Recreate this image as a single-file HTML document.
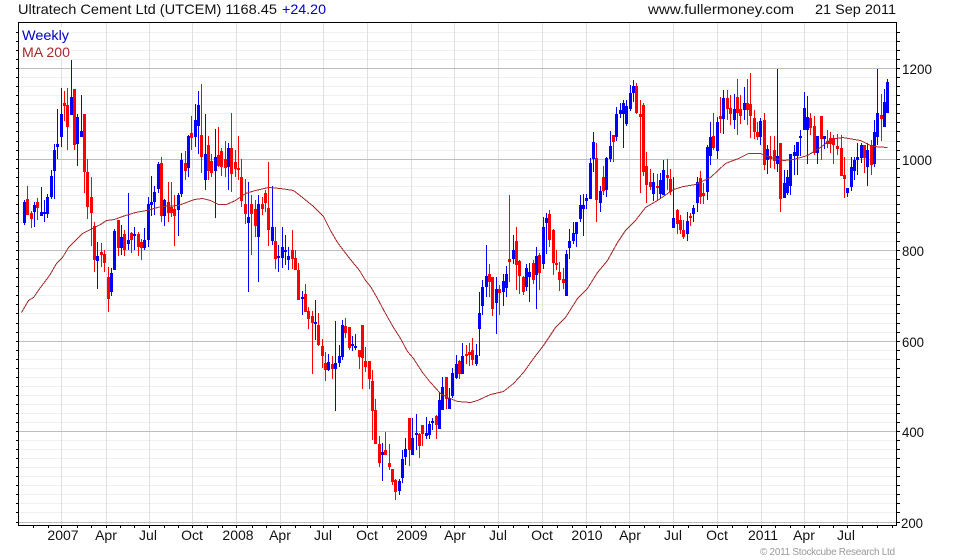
<!DOCTYPE html>
<html><head><meta charset="utf-8"><title>Ultratech Cement</title>
<style>
html,body{margin:0;padding:0;background:#fff}
svg{display:block}
text{font-family:"Liberation Sans",Arial,sans-serif;font-size:14px;fill:#111}
.r{fill:#f00}.b{fill:#00f}
</style></head><body>
<svg xmlns="http://www.w3.org/2000/svg" width="980" height="560" viewBox="0 0 980 560">
<g shape-rendering="crispEdges" fill="none">
<path stroke="#f0f0f0" transform="translate(0 .5)" d="M19 32H896M19 41H896M19 50H896M19 59H896M19 77H896M19 86H896M19 95H896M19 104H896M19 113H896M19 122H896M19 131H896M19 141H896M19 150H896M19 168H896M19 177H896M19 186H896M19 195H896M19 204H896M19 213H896M19 222H896M19 232H896M19 241H896M19 259H896M19 268H896M19 277H896M19 286H896M19 295H896M19 304H896M19 313H896M19 323H896M19 332H896M19 350H896M19 359H896M19 368H896M19 377H896M19 386H896M19 395H896M19 404H896M19 413H896M19 422H896M19 440H896M19 449H896M19 458H896M19 467H896M19 476H896M19 485H896M19 494H896M19 503H896M19 512H896"/>
<path stroke="#e0e0e0" transform="translate(.5 0)" d="M61 23V525M106 23V525M149 23V525M192 23V525M236 23V525M280 23V525M323 23V525M367 23V525M411 23V525M454 23V525M498 23V525M542 23V525M586 23V525M629 23V525M673 23V525M717 23V525M761 23V525M804 23V525M847 23V525"/>
<path stroke="#bebebe" transform="translate(0 .5)" d="M19 68H896M19 159H896M19 250H896M19 341H896M19 431H896M19 522H896"/>
<rect x="19" y="27" width="52" height="31" fill="#fff"/>
</g>
<g shape-rendering="crispEdges">
<path class=b d="M24 200h1V225h-1zM23 202h3V223h-3z"/>
<path class=r d="M27 186h1V215h-1zM26 199h3V215h-3z"/>
<path class=r d="M31 211h1V228h-1zM30 213h3V219h-3z"/>
<path class=b d="M34 202h1V227h-1zM33 205h3V212h-3z"/>
<path class=r d="M37 198h1V220h-1zM36 202h3V208h-3z"/>
<path class=b d="M41 187h1V216h-1zM40 212h3V216h-3z"/>
<path class=b d="M44 200h1V222h-1zM43 212h3V214h-3z"/>
<path class=b d="M47 194h1V218h-1zM46 197h3V214h-3z"/>
<path class=b d="M51 170h1V199h-1zM50 176h3V197h-3z"/>
<path class=b d="M54 144h1V199h-1zM53 150h3V171h-3z"/>
<path class=b d="M57 109h1V159h-1zM56 144h3V147h-3z"/>
<path class=b d="M61 88h1V147h-1zM60 114h3V137h-3z"/>
<path class=r d="M64 91h1V121h-1zM63 103h3V106h-3z"/>
<path class=r d="M67 88h1V150h-1zM66 105h3V127h-3z"/>
<path class=b d="M71 60h1V115h-1zM70 97h3V115h-3z"/>
<path class=r d="M74 89h1V150h-1zM73 89h3V145h-3z"/>
<path class=b d="M77 114h1V166h-1zM76 117h3V144h-3z"/>
<path class=b d="M81 95h1V137h-1zM80 131h3V137h-3z"/>
<path class=r d="M84 114h1V193h-1zM83 114h3V172h-3z"/>
<path class=r d="M87 159h1V219h-1zM86 172h3V207h-3z"/>
<path class=r d="M91 177h1V246h-1zM90 197h3V213h-3z"/>
<path class=r d="M94 222h1V272h-1zM93 226h3V260h-3z"/>
<path class=b d="M97 242h1V289h-1zM96 256h3V261h-3z"/>
<path class=r d="M101 243h1V267h-1zM100 252h3V255h-3z"/>
<path class=r d="M104 250h1V272h-1zM103 254h3V263h-3z"/>
<path class=r d="M108 267h1V312h-1zM107 277h3V299h-3z"/>
<path class=b d="M111 268h1V296h-1zM110 273h3V292h-3z"/>
<path class=b d="M114 229h1V270h-1zM113 231h3V270h-3z"/>
<path class=r d="M118 220h1V256h-1zM117 220h3V248h-3z"/>
<path class=b d="M121 225h1V255h-1zM120 237h3V248h-3z"/>
<path class=r d="M124 230h1V256h-1zM123 234h3V250h-3z"/>
<path class=b d="M128 193h1V250h-1zM127 240h3V244h-3z"/>
<path class=r d="M131 232h1V253h-1zM130 233h3V240h-3z"/>
<path class=b d="M134 227h1V250h-1zM133 234h3V236h-3z"/>
<path class=r d="M138 232h1V256h-1zM137 234h3V247h-3z"/>
<path class=r d="M141 239h1V260h-1zM140 242h3V248h-3z"/>
<path class=b d="M144 228h1V250h-1zM143 240h3V248h-3z"/>
<path class=b d="M148 197h1V247h-1zM147 204h3V240h-3z"/>
<path class=b d="M151 176h1V216h-1zM150 202h3V205h-3z"/>
<path class=b d="M154 186h1V215h-1zM153 192h3V202h-3z"/>
<path class=b d="M158 162h1V193h-1zM157 164h3V189h-3z"/>
<path class=r d="M161 157h1V222h-1zM160 163h3V216h-3z"/>
<path class=b d="M164 199h1V226h-1zM163 200h3V216h-3z"/>
<path class=r d="M168 182h1V222h-1zM167 202h3V213h-3z"/>
<path class=r d="M171 182h1V217h-1zM170 207h3V213h-3z"/>
<path class=r d="M174 195h1V246h-1zM173 209h3V216h-3z"/>
<path class=b d="M178 193h1V236h-1zM177 195h3V210h-3z"/>
<path class=b d="M181 153h1V197h-1zM180 160h3V194h-3z"/>
<path class=r d="M185 151h1V180h-1zM184 163h3V171h-3z"/>
<path class=b d="M188 135h1V177h-1zM187 136h3V168h-3z"/>
<path class=r d="M191 116h1V150h-1zM190 133h3V138h-3z"/>
<path class=b d="M195 104h1V147h-1zM194 120h3V137h-3z"/>
<path class=b d="M198 91h1V154h-1zM197 105h3V126h-3z"/>
<path class=r d="M201 84h1V173h-1zM200 135h3V157h-3z"/>
<path class=b d="M205 114h1V190h-1zM204 154h3V180h-3z"/>
<path class=r d="M208 136h1V180h-1zM207 145h3V171h-3z"/>
<path class=r d="M211 154h1V177h-1zM210 161h3V173h-3z"/>
<path class=b d="M215 129h1V218h-1zM214 157h3V171h-3z"/>
<path class=r d="M218 127h1V167h-1zM217 155h3V166h-3z"/>
<path class=r d="M221 148h1V176h-1zM220 151h3V167h-3z"/>
<path class=r d="M225 141h1V177h-1zM224 159h3V168h-3z"/>
<path class=b d="M228 143h1V190h-1zM227 148h3V167h-3z"/>
<path class=r d="M231 113h1V192h-1zM230 148h3V174h-3z"/>
<path class=r d="M235 150h1V177h-1zM234 162h3V169h-3z"/>
<path class=r d="M238 136h1V180h-1zM237 168h3V170h-3z"/>
<path class=r d="M241 159h1V207h-1zM240 177h3V201h-3z"/>
<path class=r d="M245 179h1V224h-1zM244 204h3V214h-3z"/>
<path class=b d="M248 182h1V292h-1zM247 217h3V223h-3z"/>
<path class=r d="M251 195h1V255h-1zM250 204h3V214h-3z"/>
<path class=r d="M255 200h1V237h-1zM254 209h3V226h-3z"/>
<path class=b d="M258 195h1V282h-1zM257 204h3V237h-3z"/>
<path class=r d="M262 197h1V215h-1zM261 204h3V209h-3z"/>
<path class=r d="M265 190h1V212h-1zM264 193h3V203h-3z"/>
<path class=r d="M268 162h1V246h-1zM267 208h3V230h-3z"/>
<path class=b d="M272 186h1V245h-1zM271 227h3V241h-3z"/>
<path class=r d="M275 227h1V269h-1zM274 241h3V259h-3z"/>
<path class=b d="M278 245h1V272h-1zM277 256h3V258h-3z"/>
<path class=b d="M282 227h1V268h-1zM281 247h3V258h-3z"/>
<path class=b d="M285 235h1V265h-1zM284 250h3V252h-3z"/>
<path class=b d="M288 247h1V270h-1zM287 256h3V260h-3z"/>
<path class=r d="M292 230h1V269h-1zM291 250h3V259h-3z"/>
<path class=r d="M295 250h1V270h-1zM294 258h3V270h-3z"/>
<path class=r d="M298 263h1V300h-1zM297 270h3V300h-3z"/>
<path class=b d="M302 291h1V315h-1zM301 297h3V299h-3z"/>
<path class=r d="M305 284h1V312h-1zM304 294h3V312h-3z"/>
<path class=r d="M308 307h1V329h-1zM307 311h3V319h-3z"/>
<path class=r d="M312 311h1V374h-1zM311 316h3V323h-3z"/>
<path class=b d="M315 300h1V340h-1zM314 322h3V324h-3z"/>
<path class=r d="M318 313h1V346h-1zM317 325h3V345h-3z"/>
<path class=r d="M322 339h1V368h-1zM321 346h3V356h-3z"/>
<path class=r d="M325 352h1V381h-1zM324 363h3V370h-3z"/>
<path class=b d="M328 354h1V371h-1zM327 362h3V370h-3z"/>
<path class=r d="M332 356h1V379h-1zM331 364h3V369h-3z"/>
<path class=b d="M335 321h1V411h-1zM334 363h3V369h-3z"/>
<path class=b d="M339 345h1V367h-1zM338 356h3V363h-3z"/>
<path class=b d="M342 320h1V360h-1zM341 325h3V357h-3z"/>
<path class=r d="M345 318h1V338h-1zM344 326h3V333h-3z"/>
<path class=r d="M349 327h1V350h-1zM348 327h3V348h-3z"/>
<path class=b d="M352 336h1V351h-1zM351 344h3V346h-3z"/>
<path class=b d="M355 334h1V350h-1zM354 346h3V348h-3z"/>
<path class=r d="M359 350h1V369h-1zM358 350h3V357h-3z"/>
<path class=r d="M362 325h1V389h-1zM361 325h3V358h-3z"/>
<path class=r d="M365 347h1V372h-1zM364 361h3V367h-3z"/>
<path class=r d="M369 361h1V389h-1zM368 361h3V379h-3z"/>
<path class=r d="M372 370h1V440h-1zM371 381h3V411h-3z"/>
<path class=r d="M375 399h1V444h-1zM374 410h3V444h-3z"/>
<path class=r d="M379 436h1V467h-1zM378 444h3V463h-3z"/>
<path class=b d="M382 443h1V481h-1zM381 452h3V455h-3z"/>
<path class=r d="M385 432h1V455h-1zM384 450h3V455h-3z"/>
<path class=r d="M389 444h1V470h-1zM388 463h3V467h-3z"/>
<path class=r d="M392 469h1V485h-1zM391 469h3V482h-3z"/>
<path class=r d="M395 479h1V500h-1zM394 480h3V492h-3z"/>
<path class=b d="M399 479h1V495h-1zM398 481h3V491h-3z"/>
<path class=b d="M402 450h1V483h-1zM401 459h3V478h-3z"/>
<path class=b d="M405 438h1V465h-1zM404 449h3V457h-3z"/>
<path class=r d="M409 418h1V466h-1zM408 418h3V450h-3z"/>
<path class=b d="M412 418h1V455h-1zM411 438h3V455h-3z"/>
<path class=b d="M416 414h1V450h-1zM415 433h3V435h-3z"/>
<path class=r d="M419 433h1V458h-1zM418 434h3V446h-3z"/>
<path class=r d="M422 425h1V446h-1zM421 425h3V434h-3z"/>
<path class=b d="M426 417h1V439h-1zM425 433h3V436h-3z"/>
<path class=b d="M429 421h1V439h-1zM428 424h3V435h-3z"/>
<path class=b d="M432 418h1V430h-1zM431 421h3V423h-3z"/>
<path class=r d="M436 415h1V439h-1zM435 416h3V425h-3z"/>
<path class=b d="M439 393h1V429h-1zM438 400h3V429h-3z"/>
<path class=b d="M442 377h1V410h-1zM441 387h3V410h-3z"/>
<path class=r d="M446 377h1V409h-1zM445 377h3V399h-3z"/>
<path class=b d="M449 388h1V409h-1zM448 398h3V409h-3z"/>
<path class=b d="M452 368h1V398h-1zM451 373h3V396h-3z"/>
<path class=b d="M456 355h1V379h-1zM455 364h3V378h-3z"/>
<path class=r d="M459 360h1V379h-1zM458 361h3V374h-3z"/>
<path class=b d="M462 343h1V374h-1zM461 356h3V374h-3z"/>
<path class=r d="M466 345h1V364h-1zM465 354h3V356h-3z"/>
<path class=r d="M469 343h1V366h-1zM468 352h3V355h-3z"/>
<path class=r d="M472 338h1V365h-1zM471 350h3V360h-3z"/>
<path class=b d="M476 344h1V366h-1zM475 355h3V364h-3z"/>
<path class=b d="M479 292h1V356h-1zM478 313h3V329h-3z"/>
<path class=b d="M482 280h1V315h-1zM481 287h3V306h-3z"/>
<path class=b d="M486 245h1V297h-1zM485 276h3V287h-3z"/>
<path class=r d="M489 264h1V297h-1zM488 274h3V282h-3z"/>
<path class=r d="M492 277h1V316h-1zM491 277h3V309h-3z"/>
<path class=b d="M496 277h1V334h-1zM495 289h3V303h-3z"/>
<path class=r d="M499 285h1V315h-1zM498 289h3V293h-3z"/>
<path class=b d="M503 274h1V306h-1zM502 281h3V292h-3z"/>
<path class=b d="M506 266h1V297h-1zM505 274h3V288h-3z"/>
<path class=r d="M509 195h1V282h-1zM508 259h3V262h-3z"/>
<path class=b d="M513 235h1V264h-1zM512 250h3V259h-3z"/>
<path class=r d="M516 227h1V290h-1zM515 241h3V265h-3z"/>
<path class=r d="M519 260h1V294h-1zM518 261h3V276h-3z"/>
<path class=r d="M523 276h1V295h-1zM522 277h3V292h-3z"/>
<path class=b d="M526 264h1V291h-1zM525 268h3V287h-3z"/>
<path class=b d="M529 263h1V302h-1zM528 272h3V277h-3z"/>
<path class=r d="M533 260h1V284h-1zM532 263h3V280h-3z"/>
<path class=b d="M536 247h1V309h-1zM535 256h3V275h-3z"/>
<path class=r d="M539 253h1V290h-1zM538 255h3V273h-3z"/>
<path class=b d="M543 217h1V269h-1zM542 227h3V264h-3z"/>
<path class=b d="M546 213h1V254h-1zM545 218h3V223h-3z"/>
<path class=r d="M549 210h1V247h-1zM548 214h3V240h-3z"/>
<path class=r d="M553 229h1V275h-1zM552 230h3V263h-3z"/>
<path class=r d="M556 250h1V270h-1zM555 263h3V265h-3z"/>
<path class=r d="M559 262h1V291h-1zM558 272h3V280h-3z"/>
<path class=r d="M563 268h1V289h-1zM562 279h3V283h-3z"/>
<path class=b d="M566 250h1V296h-1zM565 254h3V296h-3z"/>
<path class=b d="M569 229h1V259h-1zM568 241h3V248h-3z"/>
<path class=b d="M573 222h1V244h-1zM572 233h3V241h-3z"/>
<path class=b d="M576 222h1V247h-1zM575 222h3V234h-3z"/>
<path class=b d="M580 195h1V222h-1zM579 205h3V219h-3z"/>
<path class=b d="M583 194h1V236h-1zM582 205h3V209h-3z"/>
<path class=b d="M586 194h1V209h-1zM585 198h3V201h-3z"/>
<path class=b d="M590 158h1V199h-1zM589 163h3V199h-3z"/>
<path class=b d="M593 132h1V172h-1zM592 142h3V159h-3z"/>
<path class=r d="M596 143h1V222h-1zM595 158h3V200h-3z"/>
<path class=b d="M600 186h1V212h-1zM599 191h3V203h-3z"/>
<path class=r d="M603 166h1V195h-1zM602 177h3V191h-3z"/>
<path class=b d="M606 157h1V197h-1zM605 158h3V190h-3z"/>
<path class=b d="M610 131h1V162h-1zM609 146h3V159h-3z"/>
<path class=r d="M613 135h1V162h-1zM612 135h3V142h-3z"/>
<path class=b d="M616 107h1V141h-1zM615 114h3V137h-3z"/>
<path class=b d="M620 103h1V118h-1zM619 110h3V114h-3z"/>
<path class=b d="M623 100h1V148h-1zM622 103h3V114h-3z"/>
<path class=b d="M626 100h1V126h-1zM625 106h3V124h-3z"/>
<path class=b d="M630 85h1V111h-1zM629 93h3V109h-3z"/>
<path class=b d="M633 80h1V102h-1zM632 86h3V93h-3z"/>
<path class=r d="M636 83h1V114h-1zM635 86h3V113h-3z"/>
<path class=r d="M640 100h1V193h-1zM639 114h3V117h-3z"/>
<path class=r d="M643 103h1V176h-1zM642 105h3V172h-3z"/>
<path class=r d="M646 152h1V203h-1zM645 166h3V185h-3z"/>
<path class=r d="M650 169h1V190h-1zM649 182h3V187h-3z"/>
<path class=b d="M653 173h1V201h-1zM652 182h3V194h-3z"/>
<path class=r d="M657 174h1V200h-1zM656 186h3V188h-3z"/>
<path class=b d="M660 173h1V198h-1zM659 180h3V194h-3z"/>
<path class=b d="M663 160h1V195h-1zM662 170h3V195h-3z"/>
<path class=r d="M667 159h1V190h-1zM666 175h3V178h-3z"/>
<path class=r d="M670 169h1V195h-1zM669 179h3V192h-3z"/>
<path class=b d="M673 177h1V228h-1zM672 218h3V228h-3z"/>
<path class=r d="M677 209h1V234h-1zM676 210h3V224h-3z"/>
<path class=r d="M680 215h1V234h-1zM679 220h3V230h-3z"/>
<path class=r d="M683 220h1V239h-1zM682 230h3V237h-3z"/>
<path class=b d="M687 212h1V241h-1zM686 221h3V234h-3z"/>
<path class=r d="M690 213h1V226h-1zM689 216h3V218h-3z"/>
<path class=b d="M693 205h1V222h-1zM692 208h3V214h-3z"/>
<path class=b d="M697 177h1V212h-1zM696 182h3V203h-3z"/>
<path class=r d="M700 171h1V204h-1zM699 178h3V197h-3z"/>
<path class=r d="M703 183h1V204h-1zM702 193h3V196h-3z"/>
<path class=b d="M707 145h1V200h-1zM706 147h3V192h-3z"/>
<path class=b d="M710 122h1V165h-1zM709 137h3V156h-3z"/>
<path class=r d="M713 113h1V150h-1zM712 136h3V148h-3z"/>
<path class=b d="M717 117h1V159h-1zM716 122h3V151h-3z"/>
<path class=r d="M720 97h1V133h-1zM719 116h3V119h-3z"/>
<path class=b d="M723 90h1V134h-1zM722 98h3V119h-3z"/>
<path class=r d="M727 90h1V120h-1zM726 98h3V109h-3z"/>
<path class=r d="M730 95h1V125h-1zM729 108h3V114h-3z"/>
<path class=b d="M734 94h1V129h-1zM733 109h3V120h-3z"/>
<path class=r d="M737 79h1V135h-1zM736 97h3V113h-3z"/>
<path class=r d="M740 95h1V124h-1zM739 109h3V116h-3z"/>
<path class=b d="M744 87h1V120h-1zM743 103h3V110h-3z"/>
<path class=r d="M747 79h1V125h-1zM746 103h3V110h-3z"/>
<path class=r d="M750 73h1V138h-1zM749 104h3V116h-3z"/>
<path class=r d="M754 110h1V139h-1zM753 118h3V132h-3z"/>
<path class=r d="M757 122h1V140h-1zM756 132h3V137h-3z"/>
<path class=b d="M760 118h1V145h-1zM759 121h3V137h-3z"/>
<path class=r d="M764 113h1V170h-1zM763 120h3V165h-3z"/>
<path class=b d="M767 145h1V174h-1zM766 149h3V160h-3z"/>
<path class=r d="M770 136h1V168h-1zM769 156h3V159h-3z"/>
<path class=r d="M774 136h1V169h-1zM773 150h3V161h-3z"/>
<path class=b d="M777 69h1V172h-1zM776 156h3V164h-3z"/>
<path class=r d="M780 143h1V212h-1zM779 143h3V199h-3z"/>
<path class=b d="M784 170h1V198h-1zM783 183h3V198h-3z"/>
<path class=b d="M787 170h1V195h-1zM786 177h3V193h-3z"/>
<path class=b d="M790 154h1V195h-1zM789 154h3V186h-3z"/>
<path class=b d="M794 145h1V175h-1zM793 152h3V156h-3z"/>
<path class=b d="M797 142h1V175h-1zM796 142h3V156h-3z"/>
<path class=b d="M800 130h1V156h-1zM799 136h3V138h-3z"/>
<path class=b d="M804 92h1V130h-1zM803 108h3V130h-3z"/>
<path class=b d="M807 96h1V164h-1zM806 117h3V130h-3z"/>
<path class=r d="M810 113h1V135h-1zM809 118h3V128h-3z"/>
<path class=r d="M814 116h1V155h-1zM813 126h3V153h-3z"/>
<path class=b d="M817 136h1V164h-1zM816 136h3V153h-3z"/>
<path class=r d="M821 116h1V160h-1zM820 116h3V139h-3z"/>
<path class=b d="M824 136h1V149h-1zM823 136h3V139h-3z"/>
<path class=r d="M827 130h1V148h-1zM826 141h3V144h-3z"/>
<path class=r d="M830 132h1V153h-1zM829 138h3V144h-3z"/>
<path class=r d="M833 135h1V164h-1zM832 138h3V145h-3z"/>
<path class=r d="M837 134h1V155h-1zM836 146h3V149h-3z"/>
<path class=r d="M841 135h1V176h-1zM840 148h3V176h-3z"/>
<path class=r d="M844 157h1V198h-1zM843 175h3V179h-3z"/>
<path class=b d="M847 188h1V197h-1zM846 188h3V193h-3z"/>
<path class=b d="M851 157h1V191h-1zM850 167h3V187h-3z"/>
<path class=b d="M854 157h1V180h-1zM853 160h3V171h-3z"/>
<path class=b d="M857 143h1V175h-1zM856 157h3V160h-3z"/>
<path class=b d="M861 143h1V163h-1zM860 145h3V158h-3z"/>
<path class=r d="M864 145h1V173h-1zM863 145h3V158h-3z"/>
<path class=b d="M867 143h1V186h-1zM866 150h3V167h-3z"/>
<path class=r d="M871 140h1V175h-1zM870 145h3V165h-3z"/>
<path class=b d="M874 120h1V167h-1zM873 132h3V164h-3z"/>
<path class=b d="M877 69h1V145h-1zM876 113h3V137h-3z"/>
<path class=r d="M881 94h1V141h-1zM880 115h3V119h-3z"/>
<path class=b d="M884 89h1V127h-1zM883 102h3V127h-3z"/>
<path class=b d="M887 79h1V113h-1zM886 82h3V113h-3z"/>
</g>
<polyline transform="translate(.5 .5)" shape-rendering="crispEdges" fill="none" stroke="#a52a2a" stroke-width="1" points="21,312 28,300 33,297 40,287 49,275 56,263 62,257 68,247 76,239 82,233 90,229 100,224 106,220 114,219 122,216 135,212 146,210 161,206 178,205 186,202 194,199 202,198 210,200 218,204 226,204 235,200 245,193 255,190 268,187 280,188 293,190 302,197 313,206 323,216 330,230 337,242 343,250 350,259 359,270 365,280 370,286 377,298 385,313 393,327 400,338 407,351 413,358 422,372 430,382 440,393 447,397 457,401 470,402 477,400 490,394 503,391 513,383 523,372 533,358 543,345 555,327 565,317 577,298 587,288 597,272 607,260 617,242 625,230 635,220 645,207 657,200 673,189 683,186 695,184 710,177 725,163 738,158 748,153 760,153 770,157 783,160 793,159 807,155 820,147 830,139 842,137 860,140 872,146 887,147"/>
<g shape-rendering="crispEdges" fill="none" stroke="#000">
<path transform="translate(.5 .5)" d="M18 22H896V525H18Z"/>
<path transform="translate(0 .5)" d="M16 32H18M16 41H18M16 50H18M16 59H18M16 68H18M16 77H18M16 86H18M16 95H18M16 104H18M16 113H18M16 122H18M16 131H18M16 141H18M16 150H18M16 159H18M16 168H18M16 177H18M16 186H18M16 195H18M16 204H18M16 213H18M16 222H18M16 232H18M16 241H18M16 250H18M16 259H18M16 268H18M16 277H18M16 286H18M16 295H18M16 304H18M16 313H18M16 323H18M16 332H18M16 341H18M16 350H18M16 359H18M16 368H18M16 377H18M16 386H18M16 395H18M16 404H18M16 413H18M16 422H18M16 431H18M16 440H18M16 449H18M16 458H18M16 467H18M16 476H18M16 485H18M16 494H18M16 503H18M16 512H18M16 522H18"/>
<path transform="translate(0 .5)" d="M897 32H900M897 41H900M897 50H900M897 59H900M897 68H900M897 77H900M897 86H900M897 95H900M897 104H900M897 113H900M897 122H900M897 131H900M897 141H900M897 150H900M897 159H900M897 168H900M897 177H900M897 186H900M897 195H900M897 204H900M897 213H900M897 222H900M897 232H900M897 241H900M897 250H900M897 259H900M897 268H900M897 277H900M897 286H900M897 295H900M897 304H900M897 313H900M897 323H900M897 332H900M897 341H900M897 350H900M897 359H900M897 368H900M897 377H900M897 386H900M897 395H900M897 404H900M897 413H900M897 422H900M897 431H900M897 440H900M897 449H900M897 458H900M897 467H900M897 476H900M897 485H900M897 494H900M897 503H900M897 512H900M897 522H900"/>
<path transform="translate(.5 0)" d="M33 526V528M48 526V528M61 526V528M77 526V528M91 526V528M106 526V528M120 526V528M134 526V528M149 526V528M164 526V528M178 526V528M192 526V528M207 526V528M222 526V528M236 526V528M252 526V528M266 526V528M280 526V528M295 526V528M310 526V528M323 526V528M338 526V528M353 526V528M367 526V528M382 526V528M396 526V528M411 526V528M425 526V528M440 526V528M454 526V528M469 526V528M484 526V528M498 526V528M513 526V528M528 526V528M542 526V528M557 526V528M572 526V528M586 526V528M600 526V528M615 526V528M629 526V528M644 526V528M659 526V528M673 526V528M688 526V528M702 526V528M717 526V528M732 526V528M747 526V528M761 526V528M775 526V528M790 526V528M804 526V528M819 526V528M833 526V528M847 526V528M862 526V528M877 526V528M892 526V528"/>
</g>
<text x="18" y="14" textLength="259" lengthAdjust="spacingAndGlyphs">Ultratech Cement Ltd (UTCEM) 1168.45</text>
<text x="282" y="14" textLength="44" lengthAdjust="spacingAndGlyphs" style="fill:#0000c8">+24.20</text>
<text x="648" y="14" textLength="146" lengthAdjust="spacingAndGlyphs">www.fullermoney.com</text>
<text x="815" y="14" textLength="81" lengthAdjust="spacingAndGlyphs">21 Sep 2011</text>
<text x="22" y="40" textLength="47" lengthAdjust="spacingAndGlyphs" style="fill:#0000c8">Weekly</text>
<text x="22" y="57" textLength="48" lengthAdjust="spacingAndGlyphs" style="fill:#a52a2a">MA 200</text>
<text x="902" y="74" textLength="30" lengthAdjust="spacingAndGlyphs">1200</text>
<text x="902" y="165" textLength="30" lengthAdjust="spacingAndGlyphs">1000</text>
<text x="902" y="256" textLength="22" lengthAdjust="spacingAndGlyphs">800</text>
<text x="902" y="347" textLength="22" lengthAdjust="spacingAndGlyphs">600</text>
<text x="902" y="437" textLength="22" lengthAdjust="spacingAndGlyphs">400</text>
<text x="901" y="528" textLength="22" lengthAdjust="spacingAndGlyphs">200</text>
<g text-anchor="middle">
<text x="63" y="540">2007</text><text x="106" y="540">Apr</text><text x="148" y="540">Jul</text><text x="192" y="540">Oct</text>
<text x="238" y="540">2008</text><text x="280" y="540">Apr</text><text x="323" y="540">Jul</text><text x="367" y="540">Oct</text>
<text x="412" y="540">2009</text><text x="455" y="540">Apr</text><text x="498" y="540">Jul</text><text x="542" y="540">Oct</text>
<text x="587" y="540">2010</text><text x="630" y="540">Apr</text><text x="673" y="540">Jul</text><text x="717" y="540">Oct</text>
<text x="763" y="540">2011</text><text x="804" y="540">Apr</text><text x="846" y="540">Jul</text>
</g>
<text x="760" y="555" textLength="135" lengthAdjust="spacing" style="font-size:10px;fill:#9a9a9a">© 2011 Stockcube Research Ltd</text>
</svg>
</body></html>
